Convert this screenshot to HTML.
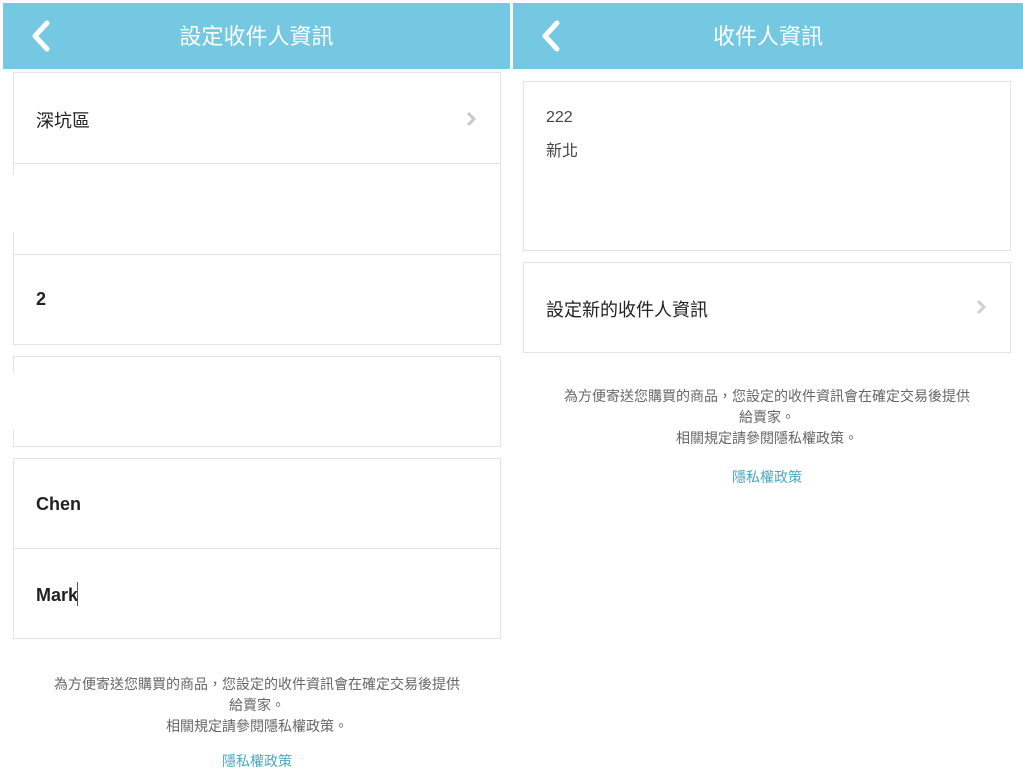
<!DOCTYPE html>
<html><head><meta charset="utf-8"><style>
*{margin:0;padding:0;box-sizing:border-box}
body{width:1023px;height:768px;background:#fff;position:relative;overflow:hidden;font-family:"Liberation Sans","Noto Sans CJK TC",sans-serif}
.a{position:absolute}
.hdr{background:#74c8e1;height:66px;top:3px}
.ttl{color:#fff;font-size:22px;top:19px;text-align:center}
.box{border:1px solid #e3e3e3;background:#fff}
.t{font-size:18px;color:#222}
.b{font-weight:bold;font-size:18px;color:#222}
.note{font-size:14px;color:#666;text-align:center;line-height:21px}
.link{font-size:14px;color:#4ba9c2;text-align:center}
</style></head><body>
<div class="a hdr" style="left:3px;width:507px"></div>
<div class="a hdr" style="left:513px;width:510px"></div>
<svg class="a" style="left:28px;top:19px" width="24" height="34"><path d="M19 4 L7 17 L19 30" stroke="#fff" stroke-width="5" fill="none" stroke-linecap="round" stroke-linejoin="round"/></svg>
<svg class="a" style="left:538px;top:19px" width="24" height="34"><path d="M19 4 L7 17 L19 30" stroke="#fff" stroke-width="5" fill="none" stroke-linecap="round" stroke-linejoin="round"/></svg>
<div class="a ttl" style="left:3px;width:507px">設定收件人資訊</div>
<div class="a ttl" style="left:513px;width:510px">收件人資訊</div>

<div class="a box" style="left:13px;top:72px;width:488px;height:273px"></div>
<div class="a" style="left:13px;top:163px;width:488px;height:1px;background:#e3e3e3"></div>
<div class="a" style="left:13px;top:254px;width:488px;height:1px;background:#e3e3e3"></div>
<div class="a" style="left:12px;top:175px;width:3px;height:57px;background:#fff"></div>
<div class="a t" style="left:36px;top:107px">深坑區</div>
<svg class="a" style="left:465px;top:110px" width="12" height="18"><path d="M3 3 L9 9 L3 15" stroke="#c8c8c8" stroke-width="3" fill="none"/></svg>
<div class="a b" style="left:36px;top:289px">2</div>

<div class="a box" style="left:13px;top:356px;width:488px;height:91px"></div>
<div class="a" style="left:12px;top:373px;width:3px;height:57px;background:#fff"></div>

<div class="a box" style="left:13px;top:458px;width:488px;height:181px"></div>
<div class="a" style="left:13px;top:548px;width:488px;height:1px;background:#e3e3e3"></div>
<div class="a b" style="left:36px;top:494px">Chen</div>
<div class="a b" style="left:36px;top:585px">Mark</div>
<div class="a" style="left:77px;top:582px;width:1px;height:24px;background:#555"></div>

<div class="a note" style="left:13px;top:674px;width:488px">為方便寄送您購買的商品，您設定的收件資訊會在確定交易後提供<br>給賣家。<br>相關規定請參閱隱私權政策。</div>
<div class="a link" style="left:13px;top:751px;width:488px">隱私權政策</div>

<div class="a box" style="left:523px;top:81px;width:488px;height:170px"></div>
<div class="a" style="left:546px;top:109px;font-size:16px;color:#444">222</div>
<div class="a" style="left:546px;top:137px;font-size:16px;color:#444">新北</div>
<div class="a box" style="left:523px;top:262px;width:488px;height:91px"></div>
<div class="a t" style="left:546px;top:296px">設定新的收件人資訊</div>
<svg class="a" style="left:975px;top:298px" width="12" height="18"><path d="M3 3 L9 9 L3 15" stroke="#d0d0d0" stroke-width="3" fill="none"/></svg>
<div class="a note" style="left:523px;top:386px;width:488px">為方便寄送您購買的商品，您設定的收件資訊會在確定交易後提供<br>給賣家。<br>相關規定請參閱隱私權政策。</div>
<div class="a link" style="left:523px;top:467px;width:488px">隱私權政策</div>
</body></html>
